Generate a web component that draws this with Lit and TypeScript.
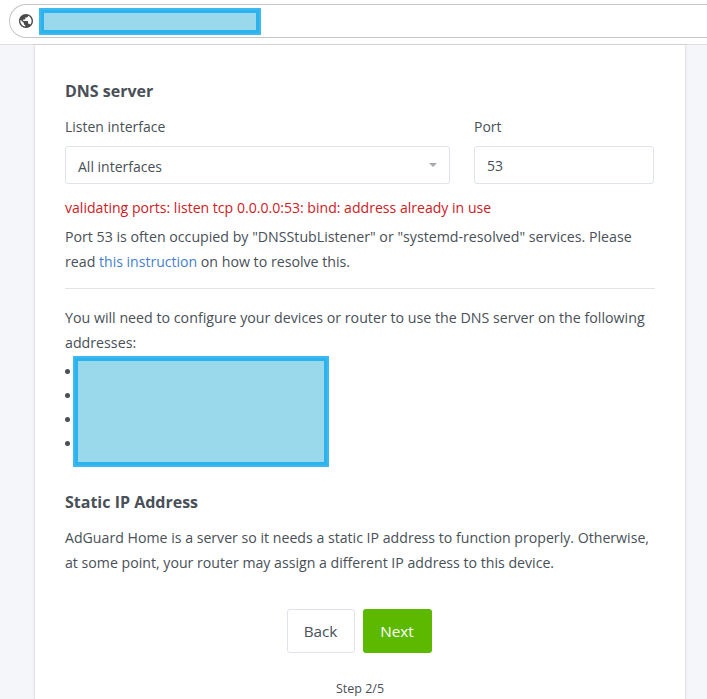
import { LitElement, html, css } from "lit";
import { customElement } from "lit/decorators.js";

@customElement("app-root")
export class AppRoot extends LitElement {
  static styles = css`
    :host {
      display: block;
      height: 699px;
      overflow: hidden;
      background: #f5f6fa;
      font-family: "Open Sans", "Noto Sans", sans-serif;
      font-size: 14px;
      color: #495057;
    }
    .topbar {
      box-sizing: border-box;
      height: 45px;
      background: #fff;
      border-bottom: 1px solid #dedede;
      padding: 4px 0 0 9px;
    }
    .pill {
      box-sizing: border-box;
      height: 34px;
      display: flex;
      align-items: center;
      gap: 6px;
      padding-left: 9px;
      background: #fff;
      border: 1px solid #c6c6c6;
      border-right: none;
      border-radius: 17px 0 0 17px;
      margin-right: -1px;
    }
    .globe {
      width: 14px;
      height: 14px;
      flex: none;
    }
    .mask {
      box-sizing: border-box;
      background: #9ad9ec;
      border: 5px solid #2cb2ec;
      outline: 2px solid #3cb9ef;
      outline-offset: -2px;
    }
    .url-mask {
      width: 222px;
      height: 27px;
      flex: none;
    }
    .card {
      box-sizing: border-box;
      width: 650px;
      height: 654px;
      margin-left: 35px;
      padding: 35px 30px 0;
      background: #fff;
      box-shadow: 0 0 0 1px rgba(110, 117, 130, 0.08), 0 1px 3px rgba(110, 117, 130, 0.2);
    }
    h2 {
      margin: 0;
      font-size: 16px;
      line-height: 22px;
      font-weight: 700;
      color: #495057;
    }
    .fields {
      display: flex;
      gap: 24px;
      margin-top: 15px;
    }
    .field-iface {
      width: 385px;
    }
    .field-port {
      width: 180px;
    }
    label {
      display: block;
      line-height: 20px;
      margin-bottom: 9px;
    }
    .control {
      box-sizing: border-box;
      height: 38px;
      display: flex;
      align-items: center;
      justify-content: space-between;
      padding: 2px 12px 0;
      background: #fff;
      border: 1px solid #dfe3ec;
      border-radius: 3px;
      line-height: 20px;
    }
    .control.select {
      padding-top: 4px;
    }
    .caret {
      width: 0;
      height: 0;
      border-left: 4px solid transparent;
      border-right: 4px solid transparent;
      border-top: 4px solid #a5a9ae;
      margin-top: -4px;
    }
    .error {
      margin-top: 14px;
      line-height: 20px;
      font-size: 14.08px;
      color: #cd201f;
    }
    .help {
      margin: 7px 0 0;
      line-height: 24.5px;
      font-size: 14.2px;
    }
    a {
      color: #467fcf;
      text-decoration: none;
      font-size: 14.05px;
    }
    hr {
      margin: 14px 0 0 0;
      border: none;
      border-top: 1px solid #e2e4e8;
    }
    .intro {
      margin: 16px 0 0;
      line-height: 25px;
      font-size: 14.22px;
    }
    .list-wrap {
      position: relative;
    }
    ul {
      list-style: none;
      margin: 4px 0 0;
      padding: 0;
    }
    li {
      height: 24px;
      display: flex;
      align-items: center;
    }
    li::before {
      content: "";
      width: 5px;
      height: 5px;
      border-radius: 50%;
      background: #495057;
    }
    .list-mask {
      position: absolute;
      left: 8px;
      top: -3px;
      width: 256px;
      height: 111px;
    }
    .static-title {
      margin-top: 36px;
    }
    .static-text {
      margin: 12px 0 0;
      line-height: 25px;
      font-size: 14.15px;
    }
    .actions {
      display: flex;
      justify-content: center;
      gap: 8px;
      margin-top: 34px;
      padding-right: 2px;
    }
    .btn {
      box-sizing: border-box;
      height: 44px;
      display: flex;
      align-items: center;
      justify-content: center;
      border-radius: 3px;
      font-size: 15.3px;
    }
    .back {
      width: 68px;
      background: #fff;
      border: 1px solid #dfe3ec;
      color: #495057;
    }
    .next {
      width: 69px;
      background: #5cb900;
      color: #fff;
      font-weight: 500;
    }
    .step {
      margin-top: 27px;
      text-align: center;
      font-size: 12.5px;
      line-height: 18px;
    }
  `;

  render() {
    return html`
      <div class="topbar">
        <div class="pill">
          <svg class="globe" viewBox="2 2 20 20">
            <path
              fill="#4a4a4a"
              d="M12 2C6.48 2 2 6.48 2 12s4.48 10 10 10 10-4.48 10-10S17.52 2 12 2zm-1 17.93c-3.95-.49-7-3.85-7-7.93 0-.62.08-1.21.21-1.79L9 15v1c0 1.1.9 2 2 2v1.93zm6.9-2.54c-.26-.81-1-1.39-1.9-1.39h-1v-3c0-.55-.45-1-1-1H8v-2h2c.55 0 1-.45 1-1V7h2c1.1 0 2-.9 2-2v-.41c2.93 1.19 5 4.06 5 7.41 0 2.08-.8 3.97-2.1 5.39z"
            ></path>
          </svg>
          <div class="mask url-mask"></div>
        </div>
      </div>
      <div class="card">
        <h2>DNS server</h2>
        <div class="fields">
          <div class="field-iface">
            <label>Listen interface</label>
            <div class="control select">All interfaces<span class="caret"></span></div>
          </div>
          <div class="field-port">
            <label>Port</label>
            <div class="control">53</div>
          </div>
        </div>
        <div class="error">validating ports: listen tcp 0.0.0.0:53: bind: address already in use</div>
        <p class="help">
          Port 53 is often occupied by "DNSStubListener" or "systemd-resolved" services. Please read
          <a href="#">this instruction</a> on how to resolve this.
        </p>
        <hr />
        <p class="intro">
          You will need to configure your devices or router to use the DNS server on the following addresses:
        </p>
        <div class="list-wrap">
          <ul>
            <li></li>
            <li></li>
            <li></li>
            <li></li>
          </ul>
          <div class="mask list-mask"></div>
        </div>
        <h2 class="static-title">Static IP Address</h2>
        <p class="static-text">
          AdGuard Home is a server so it needs a static IP address to function properly. Otherwise, at some point, your
          router may assign a different IP address to this device.
        </p>
        <div class="actions">
          <div class="btn back">Back</div>
          <div class="btn next">Next</div>
        </div>
        <div class="step">Step 2/5</div>
      </div>
    `;
  }
}
